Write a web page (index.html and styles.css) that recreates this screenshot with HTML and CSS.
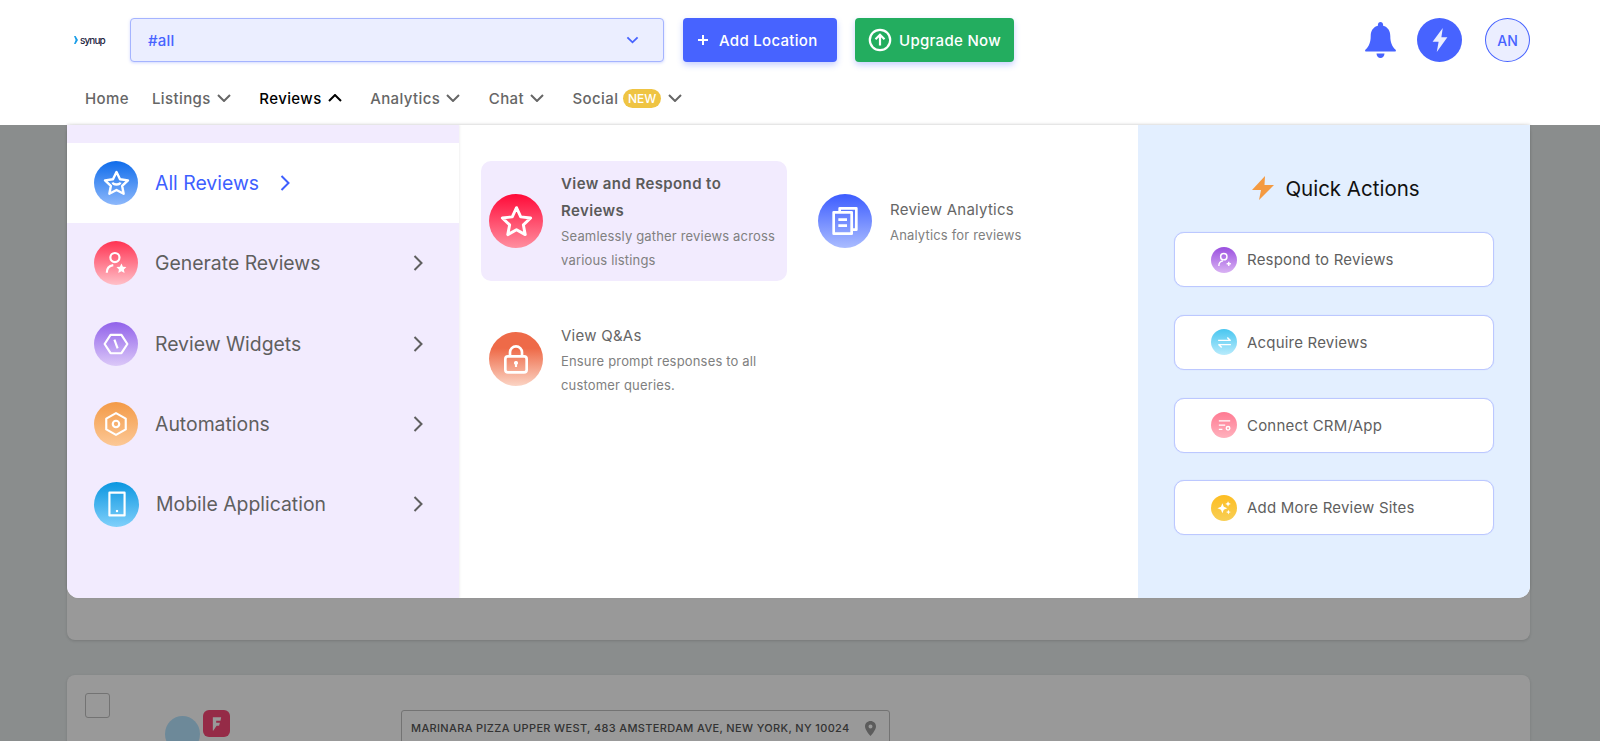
FILE: index.html
```html
<!DOCTYPE html>
<html lang="en">
<head>
    <meta charset="UTF-8">
    <meta name="viewport" content="width=device-width, initial-scale=1.0">
    <title>Reviews</title>
    <link rel="stylesheet" href="styles.css">
</head>
<body>
    <header class="header">
        <div class="top-row">
            <div class="logo">
                <svg class="logo-mark" viewBox="0 0 4 8"><path d="M0 0h1.6L4 4 1.6 8H0l1.6-4z"/></svg>
                <span>synup</span>
            </div>
            <div class="select">
                <span>#all</span>
                <svg class="select-arrow" viewBox="0 0 14 8"><path d="M1.5 1.2 7 6.5l5.5-5.3"/></svg>
            </div>
            <button class="btn btn-blue">
                <svg class="btn-plus" viewBox="0 0 12 12"><path d="M6 1v10M1 6h10"/></svg>
                Add Location
            </button>
            <button class="btn btn-green">
                <svg class="btn-up" viewBox="0 0 24 24"><circle cx="12" cy="12" r="10.2"/><path d="M12 17.5V7M7.5 11.2 12 6.8l4.500 4.400"/></svg>
                Upgrade Now
            </button>
            <div class="top-right">
                <svg class="bell" viewBox="0 0 31 36"><path d="M15.500 0c1.500 0 2.600 1.200 2.600 2.700v1.100c4.600 1.200 7.200 5 7.200 10.200 0 6 1.500 10.400 5.300 13.700.5.400.4 1.900-.6 1.900H1c-1 0-1.100-1.500-.6-1.900C4.200 24.400 5.700 20 5.700 14c0-5.200 2.600-9 7.200-10.200V2.700C12.900 1.200 14 0 15.500 0zM11.500 31.500h8c0 2.500-1.800 4.500-4 4.500s-4-2-4-4.500z"/></svg>
                <div class="bolt-circle">
                    <svg viewBox="0 0 16 26"><path d="M11 0 0 15h6.500L4.500 26 16 10H9.500z"/></svg>
                </div>
                <div class="avatar">AN</div>
            </div>
        </div>
        <nav class="nav">
            <a class="nav-item nav-home">Home</a>
            <a class="nav-item">Listings <svg viewBox="0 0 14 8"><path d="M1 1l6 6 6-6"/></svg></a>
            <a class="nav-item active">Reviews <svg viewBox="0 0 14 8"><path d="M1 7l6-6 6 6"/></svg></a>
            <a class="nav-item">Analytics <svg viewBox="0 0 14 8"><path d="M1 1l6 6 6-6"/></svg></a>
            <a class="nav-item">Chat <svg viewBox="0 0 14 8"><path d="M1 1l6 6 6-6"/></svg></a>
            <a class="nav-item nav-social">Social <span class="new-badge">NEW</span> <svg viewBox="0 0 14 8"><path d="M1 1l6 6 6-6"/></svg></a>
        </nav>
    </header>

    <main class="page">
        <div class="card card-first"></div>
        <div class="card card-listing">
            <div class="checkbox"></div>
            <div class="source">
                <div class="source-circle"></div>
                <div class="source-badge">
                    <svg viewBox="0 0 12 16"><path d="M1 0h10l-.8 4H5v2.500h4.500L8.500 10H5.500L1.500 16H1z"/></svg>
                </div>
            </div>
            <div class="address">
                <span>MARINARA PIZZA UPPER WEST, 483 AMSTERDAM AVE, NEW YORK, NY 10024</span>
                <svg viewBox="0 0 11 15"><path fill-rule="evenodd" d="M5.500 0C8.500 0 11 2.400 11 5.400 11 9 5.500 15 5.500 15S0 9 0 5.400C0 2.400 2.500 0 5.500 0zm0 3.500a2 2 0 1 0 0 4 2 2 0 0 0 0-4z"/></svg>
            </div>
        </div>
    </main>

    <div class="overlay"></div>

    <section class="mega-menu">
        <aside class="side">
            <div class="side-item side-active">
                <span class="icon-circle side-icon grad-blue">
                    <svg viewBox="0 0 24 24"><path d="M12 2.500l2.900 6 6.600.9-4.800 4.600 1.200 6.500-5.900-3.100-5.900 3.100 1.200-6.500-4.800-4.600 6.600-.9z"/><path d="M8.800 11.200c.6 2.200 5.800 2.200 6.400 0"/></svg>
                </span>
                <span>All Reviews</span>
                <svg class="side-chevron" viewBox="0 0 10 16"><path d="M1.500 1 8.500 8l-7 7"/></svg>
            </div>
            <div class="side-item">
                <span class="icon-circle side-icon grad-red">
                    <svg viewBox="0 0 24 24"><circle cx="11" cy="7" r="4.200"/><path d="M3.500 21c0-4 2.500-6.500 6-7"/><path class="fill" d="M17 12.500l1.400 2.900 3.200.4-2.300 2.200.6 3.200-2.900-1.500-2.900 1.500.6-3.200-2.300-2.200 3.200-.4z"/></svg>
                </span>
                <span>Generate Reviews</span>
                <svg class="side-chevron" viewBox="0 0 10 16"><path d="M1.500 1 8.500 8l-7 7"/></svg>
            </div>
            <div class="side-item">
                <span class="icon-circle side-icon grad-purple">
                    <svg viewBox="0 0 24 24"><path d="M7 3.500h10L22.500 12 17 20.500H7L1.500 12z"/><path d="M10.500 8l3 8"/></svg>
                </span>
                <span>Review Widgets</span>
                <svg class="side-chevron" viewBox="0 0 10 16"><path d="M1.500 1 8.500 8l-7 7"/></svg>
            </div>
            <div class="side-item">
                <span class="icon-circle side-icon grad-orange">
                    <svg viewBox="0 0 24 24"><path d="M12 2l9 5v10l-9 5-9-5V7z"/><circle cx="12" cy="12" r="3"/></svg>
                </span>
                <span>Automations</span>
                <svg class="side-chevron" viewBox="0 0 10 16"><path d="M1.500 1 8.500 8l-7 7"/></svg>
            </div>
            <div class="side-item side-item-mobile">
                <span class="icon-circle side-icon grad-sky">
                    <svg viewBox="0 0 24 24"><rect x="5" y="1.500" width="14" height="21"/><path class="fill" d="M11 17.500h2v2h-2z"/></svg>
                </span>
                <span>Mobile Application</span>
                <svg class="side-chevron" viewBox="0 0 10 16"><path d="M1.500 1 8.500 8l-7 7"/></svg>
            </div>
        </aside>

        <div class="links">
            <div class="link-card link-active">
                <span class="icon-circle link-icon grad-crimson">
                    <svg viewBox="0 0 24 24"><path d="M12 2.500l2.900 6.300 6.800.8-5 4.700 1.300 6.700-6-3.400-6 3.400 1.300-6.700-5-4.700 6.800-.8z"/></svg>
                </span>
                <div class="link-text">
                    <h3>View and Respond to Reviews</h3>
                    <p>Seamlessly gather reviews across various listings</p>
                </div>
            </div>
            <div class="link-card link-short">
                <span class="icon-circle link-icon grad-indigo">
                    <svg viewBox="0 0 24 24"><path d="M8 5.500V2.500h12.500v16H17"/><rect x="3.500" y="5.500" width="13.500" height="16"/><path d="M7 11h6.500M7 15.500h6.500"/></svg>
                </span>
                <div class="link-text">
                    <h3>Review Analytics</h3>
                    <p>Analytics for reviews</p>
                </div>
            </div>
            <div class="link-card link-lower">
                <span class="icon-circle link-icon grad-coral">
                    <svg viewBox="0 0 24 24"><rect x="4" y="10" width="16" height="12" rx="2"/><path d="M7.500 10V7a4.500 4.500 0 0 1 9 0v3"/><path class="fill" d="M12 13.500a1.500 1.500 0 0 1 .8 2.800V18h-1.600v-1.700a1.500 1.500 0 0 1 .8-2.800z"/></svg>
                </span>
                <div class="link-text">
                    <h3>View Q&amp;As</h3>
                    <p>Ensure prompt responses to all customer queries.</p>
                </div>
            </div>
        </div>

        <aside class="quick">
            <h2 class="quick-title">
                <svg viewBox="0 0 22 24"><path d="M13 0 0 14h9l-2 10 15-15h-9.500z"/></svg>
                Quick Actions
            </h2>
            <div class="quick-item">
                <span class="icon-circle quick-icon grad-violet">
                    <svg viewBox="0 0 24 24"><circle cx="11" cy="8" r="4.500"/><path d="M4 21c0-4 2.500-6.500 6-7M15 18h6M18 15v6"/></svg>
                </span>
                Respond to Reviews
            </div>
            <div class="quick-item">
                <span class="icon-circle quick-icon grad-cyan">
                    <svg viewBox="0 0 24 24"><path d="M3 9h17L16 5M21 15H4l4 4"/></svg>
                </span>
                Acquire Reviews
            </div>
            <div class="quick-item">
                <span class="icon-circle quick-icon grad-pink">
                    <svg viewBox="0 0 24 24"><path d="M4 5.500h16M4 11.500h9M4 17.500h5"/><circle cx="17" cy="16" r="2.500"/></svg>
                </span>
                Connect CRM/App
            </div>
            <div class="quick-item">
                <span class="icon-circle quick-icon grad-yellow">
                    <svg viewBox="0 0 24 24"><path class="fill" d="M9 6l2 5 5 2-5 2-2 5-2-5-5-2 5-2zM17 3l1.200 2.800L21 7l-2.800 1.200L17 11l-1.200-2.800L13 7l2.800-1.200zM17.500 15l1 2.500 2.500 1-2.500 1-1 2.500-1-2.500-2.500-1 2.500-1z"/></svg>
                </span>
                Add More Review Sites
            </div>
        </aside>
    </section>
</body>
</html>
```

FILE: styles.css
```css
* {
    box-sizing: border-box;
    margin: 0;
    padding: 0;
}

body {
    height: 741px;
    overflow: hidden;
    position: relative;
    font-family: 'Inter', 'Liberation Sans', sans-serif;
    background-color: #e6ebeb;
    color: #666;
}

/* header */
.header {
    height: 125px;
    background-color: #fff;
    padding-top: 18px;
}

.top-row {
    display: flex;
    align-items: center;
    height: 44px;
    padding: 0 70px 0 74px;
}

.logo {
    width: 56px;
    display: flex;
    align-items: center;
    gap: 2px;
    font-size: 10px;
    font-weight: 500;
    letter-spacing: -0.9px;
    color: #1c2340;
}

.logo-mark {
    width: 4px;
    height: 8px;
    fill: #1b9ee8;
}

.select {
    width: 534px;
    height: 44px;
    display: flex;
    align-items: center;
    justify-content: space-between;
    padding: 0 24px 0 17px;
    background-color: #ebeeff;
    border: 1px solid #a5b4ff;
    border-radius: 4px;
    box-shadow: 0 1px 3px rgba(71, 99, 255, 0.25);
    color: #4763ff;
    font-size: 15px;
    font-weight: 500;
    letter-spacing: 0.2px;
}

.select-arrow {
    width: 13px;
    height: 8px;
    fill: none;
    stroke: #4763ff;
    stroke-width: 2;
}

.btn {
    height: 44px;
    display: flex;
    align-items: center;
    border: none;
    border-radius: 4px;
    color: #fff;
    font-family: inherit;
    font-size: 15px;
    font-weight: 500;
    letter-spacing: 0.3px;
    box-shadow: 0 3px 6px rgba(71, 99, 255, 0.3);
}

.btn-blue {
    width: 154px;
    margin-left: 19px;
    padding-left: 14px;
    gap: 10px;
    background-color: #4763ff;
}

.btn-plus {
    width: 12px;
    height: 12px;
    fill: none;
    stroke: #fff;
    stroke-width: 2;
}

.btn-green {
    width: 159px;
    margin-left: 18px;
    padding-left: 13px;
    gap: 7px;
    background-color: #23ad5f;
}

.btn-up {
    width: 24px;
    height: 24px;
    fill: none;
    stroke: #fff;
    stroke-width: 2.200;
}

.top-right {
    margin-left: auto;
    display: flex;
    align-items: center;
}

.bell {
    width: 31px;
    height: 36px;
    fill: #4763ff;
}

.bolt-circle {
    width: 45px;
    height: 44px;
    margin-left: 21px;
    display: flex;
    align-items: center;
    justify-content: center;
    border-radius: 50%;
    background-color: #4763ff;
}

.bolt-circle svg {
    width: 16px;
    height: 24px;
    fill: #ebeeff;
}

.avatar {
    width: 45px;
    height: 44px;
    margin-left: 23px;
    display: flex;
    align-items: center;
    justify-content: center;
    border-radius: 50%;
    background-color: #ebeeff;
    border: 1px solid #4763ff;
    color: #4763ff;
    font-size: 14px;
    font-weight: 500;
}

.nav {
    display: flex;
    align-items: center;
    gap: 28.5px;
    height: 26px;
    margin-top: 23px;
    padding-left: 85px;
    font-size: 15px;
    letter-spacing: 0.4px;
}

.nav-item {
    display: flex;
    align-items: center;
    gap: 6px;
    color: #666;
    font-weight: 500;
}

.nav-item svg {
    width: 14px;
    height: 8px;
    fill: none;
    stroke: #666;
    stroke-width: 2;
}

.nav-home {
    margin-right: -5.5px;
}

.nav-item.active {
    color: #000;
}

.nav-item.active svg {
    stroke: #000;
}

.nav-social {
    gap: 0;
}

.nav-social svg {
    margin-left: 7px;
}

.new-badge {
    margin-left: 5px;
    padding: 0 4.500px;
    height: 19px;
    line-height: 19px;
    border-radius: 10px;
    background-color: #efc443;
    color: #fff;
    font-size: 12px;
    letter-spacing: 0;
}

/* page behind the menu */
.page {
    padding: 0 70px 0 67px;
}

.card {
    background-color: #fff;
    border-radius: 8px;
    box-shadow: 0 1px 3px rgba(0, 0, 0, 0.15);
}

.card-first {
    height: 515px;
}

.card-listing {
    display: flex;
    align-items: flex-start;
    height: 300px;
    margin-top: 35px;
    padding: 18px;
}

.checkbox {
    width: 25px;
    height: 25px;
    border: 1px solid #c0c0c0;
    border-radius: 3px;
}

.source {
    position: relative;
    width: 35px;
    height: 60px;
    margin: 23px 0 0 55px;
}

.source-circle {
    width: 35px;
    height: 36px;
    border-radius: 50%;
    background-color: #b6e5ff;
}

.source-badge {
    position: absolute;
    left: 38px;
    top: -6px;
    width: 27px;
    height: 27px;
    display: flex;
    align-items: center;
    justify-content: center;
    border-radius: 6px;
    background-color: #f94877;
}

.source-badge svg {
    width: 10px;
    height: 14px;
    fill: #fff;
}

.address {
    width: 489px;
    height: 36px;
    margin: 17px 0 0 201px;
    display: flex;
    align-items: center;
    justify-content: space-between;
    padding: 0 13px 0 9px;
    border: 1px solid #c0c0c0;
    border-radius: 3px;
    font-size: 11px;
    font-weight: 500;
    letter-spacing: 0.35px;
    white-space: nowrap;
    color: #555;
}

.address svg {
    width: 11px;
    height: 15px;
    fill: #999;
}

.overlay {
    position: absolute;
    top: 125px;
    left: 0;
    right: 0;
    bottom: 0;
    background-color: rgba(0, 0, 0, 0.4);
}

/* mega menu */
.mega-menu {
    position: absolute;
    top: 125px;
    left: 67px;
    width: 1463px;
    height: 473px;
    display: grid;
    grid-template-columns: 392px 679px 392px;
    overflow: hidden;
    background-color: #fff;
    border-radius: 0 0 12px 12px;
    box-shadow: 0 -1px 3px rgba(0, 0, 0, 0.12);
}

.icon-circle {
    flex-shrink: 0;
    display: flex;
    align-items: center;
    justify-content: center;
    border-radius: 50%;
}

.icon-circle svg {
    fill: none;
    stroke: #fff;
    stroke-width: 2;
    stroke-linejoin: round;
}

.icon-circle svg .fill {
    fill: #fff;
    stroke: none;
}

.grad-blue { background: linear-gradient(#0f6ceb, #8db8fb); }
.grad-red { background: linear-gradient(#ff3352, #ffc0c8); }
.grad-purple { background: linear-gradient(#9162ea, #dbc8f8); }
.grad-orange { background: linear-gradient(#f39a47, #fcc896); }
.grad-sky { background: linear-gradient(#0b96e0, #80d0fb); }
.grad-crimson { background: linear-gradient(#ff0a38, #ff8fa0); }
.grad-indigo { background: linear-gradient(#3c5cff, #aabcff); }
.grad-coral { background: linear-gradient(#ee6a48 30%, #fbd4c4); }
.grad-violet { background: linear-gradient(#9a4fdf, #d9b2f3); }
.grad-cyan { background: linear-gradient(#48c6f0, #b8ebfc); }
.grad-pink { background: linear-gradient(#ff7a92, #ffb1bd); }
.grad-yellow { background: linear-gradient(#fdbd22, #f8cf55); }

.side {
    padding-top: 18px;
    background-color: #f2ebfe;
    box-shadow: 1px 0 2px rgba(0, 0, 0, 0.06);
    z-index: 1;
}

.side-item {
    height: 80.25px;
    display: flex;
    align-items: center;
    padding: 0 36px 0 27px;
    font-size: 19.4px;
    color: #5f5f5f;
}

.side-item > span:nth-child(2) {
    margin-left: 17px;
}

.side-item .side-chevron {
    width: 10px;
    height: 16px;
    margin-left: auto;
    fill: none;
    stroke: #5f5f5f;
    stroke-width: 2;
}

.side-active {
    background-color: #fff;
    color: #3e5fff;
}

.side-active .side-chevron {
    margin-left: 21px;
    stroke: #3e5fff;
}

.side-icon {
    width: 44px;
    height: 44px;
}

.side-icon svg {
    width: 26px;
    height: 26px;
}

.grad-blue svg {
    width: 29px;
    height: 29px;
}

.side-item-mobile .side-icon {
    width: 45px;
    height: 45px;
}

.links {
    display: grid;
    grid-template-columns: 306px 1fr;
    grid-template-rows: 120px 1fr;
    column-gap: 23px;
    row-gap: 30px;
    padding: 36px 22px 0;
    align-items: start;
}

.link-card {
    display: flex;
    align-items: center;
    gap: 18px;
    padding: 0 8px;
    border-radius: 10px;
}

.link-active {
    height: 120px;
    background-color: #f2ebfe;
}

.link-short {
    height: 120px;
}

.link-lower {
    height: 96px;
}

.link-icon {
    width: 54px;
    height: 54px;
}

.link-icon svg {
    width: 32px;
    height: 32px;
}

.link-icon.grad-crimson svg {
    width: 35px;
    height: 35px;
}

.link-text h3 {
    font-size: 15px;
    font-weight: 400;
    line-height: 27px;
    letter-spacing: 0.25px;
    color: #666;
}

.link-active .link-text h3 {
    font-weight: 600;
    letter-spacing: 0.4px;
    color: #5a5a5a;
}

.link-text p {
    font-size: 13px;
    line-height: 24px;
    letter-spacing: 0.17px;
    color: #808080;
}

.quick {
    padding: 45px 36px 0;
    background-color: #e3efff;
}

.quick-title {
    display: flex;
    align-items: center;
    justify-content: center;
    gap: 11px;
    height: 36px;
    margin-bottom: 26px;
    padding-left: 4px;
    font-size: 20.500px;
    font-weight: 400;
    color: #111;
}

.quick-title svg {
    width: 22px;
    height: 24px;
    fill: #f49a41;
}

.quick-item {
    height: 55px;
    margin-bottom: 27.75px;
    display: flex;
    align-items: center;
    gap: 10px;
    padding-left: 36px;
    background-color: #fff;
    border: 1px solid #bcc8ff;
    border-radius: 10px;
    box-shadow: 0 0 1px #bcc8ff;
    font-size: 15px;
    letter-spacing: 0.2px;
    color: #5f5f5f;
}

.quick-icon {
    width: 26px;
    height: 26px;
}

.quick-icon svg {
    width: 17px;
    height: 17px;
}
```
